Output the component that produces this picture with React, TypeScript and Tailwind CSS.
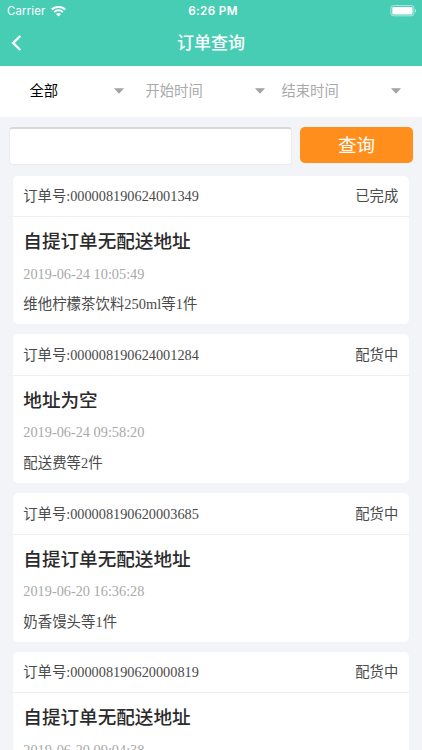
import React from "react";

interface Order {
  id: string;
  status: string;
  address: string;
  time: string;
  summary: string;
}

const orders: Order[] = [
  {
    id: "000008190624001349",
    status: "已完成",
    address: "自提订单无配送地址",
    time: "2019-06-24 10:05:49",
    summary: "维他柠檬茶饮料250ml等1件",
  },
  {
    id: "000008190624001284",
    status: "配货中",
    address: "地址为空",
    time: "2019-06-24 09:58:20",
    summary: "配送费等2件",
  },
  {
    id: "000008190620003685",
    status: "配货中",
    address: "自提订单无配送地址",
    time: "2019-06-20 16:36:28",
    summary: "奶香馒头等1件",
  },
  {
    id: "000008190620000819",
    status: "配货中",
    address: "自提订单无配送地址",
    time: "2019-06-20 09:04:38",
    summary: "鲜牛奶等1件",
  },
];

const StatusBar = () => (
  <div className="grid h-[22px] grid-cols-3 items-center pl-[7px] pr-[5px] font-['Inter','Liberation_Sans',sans-serif] text-white">
    <div className="flex items-center gap-[6px]">
      <span className="text-[11.4px] leading-[22px] tracking-[0.15px]">Carrier</span>
      <svg className="h-[11px] w-[15px]" viewBox="0 0 15 11" fill="none" stroke="currentColor">
        <path d="M0.8 3.6a9.6 9.6 0 0 1 13.4 0" strokeWidth="2.1" />
        <path d="M3.2 6.1a6.1 6.1 0 0 1 8.6 0" strokeWidth="2" />
        <path d="M7.5 10.6 5 8.1a3.6 3.6 0 0 1 5 0z" fill="currentColor" stroke="none" />
      </svg>
    </div>
    <span className="whitespace-nowrap pl-[2px] text-center text-[11.7px] leading-[22px] font-semibold tracking-[0.35px]">
      6:26 PM
    </span>
    <svg className="h-[12px] w-[27px] justify-self-end" viewBox="0 0 27 12" fill="none">
      <rect x="0.9" y="0.6" width="23" height="10.2" rx="2.4" stroke="white" strokeOpacity="0.55" />
      <rect x="2.3" y="2" width="20.2" height="7.4" rx="1" fill="white" />
      <path d="M25 4c1.5.4 1.5 3.2 0 3.6z" fill="white" fillOpacity="0.6" />
    </svg>
  </div>
);

const Caret = () => (
  <svg className="h-[6px] w-[10px]" viewBox="0 0 10 6" fill="#a3a3a3">
    <path d="M0 0.3h10L5 5.7z" />
  </svg>
);

const OrderCard = ({ order }: { order: Order }) => (
  <article className="h-[148.5px] shrink-0 rounded-[5px] bg-white px-[10.3px] text-[14.3px] text-[#4a4a4a]">
    <header className="-mx-[10.3px] flex h-[41.5px] items-center justify-between border-b border-[#efefef] pt-[2px] pl-[10.3px] pr-[10.8px]">
      <span>订单号:{order.id}</span>
      <span>{order.status}</span>
    </header>
    <h2 className="mt-[11px] text-[18.6px] leading-[27px] font-medium text-[#2b2b2b]">{order.address}</h2>
    <p className="mt-[8.5px] leading-[20px] text-[#a9a9a9]">{order.time}</p>
    <p className="mt-[10.5px] text-[14.4px] leading-[20px] tracking-[0.04px]">{order.summary}</p>
  </article>
);

export default function App() {
  return (
    <div className="flex h-[750px] w-[422px] flex-col overflow-hidden bg-[#f3f4f7] font-['Liberation_Serif','Noto_Sans_CJK_SC',serif]">
      <header className="h-[65.5px] shrink-0 bg-[#48cdb5] text-white">
        <StatusBar />
        <div className="grid h-[43px] grid-cols-[40px_1fr_40px] items-center">
          <button className="pb-[1px] pl-[11px]" aria-label="返回">
            <svg className="h-[16px] w-[11px]" viewBox="0 0 11 16" fill="none" stroke="currentColor" strokeWidth="2.4">
              <path d="M9.3 1 2.2 8l7.1 7" />
            </svg>
          </button>
          <h1 className="text-center text-[17px] font-medium">订单查询</h1>
        </div>
      </header>

      <nav className="flex h-[51px] shrink-0 items-center bg-white text-[14.3px] text-[#aaa]">
        <div className="flex w-[124px] items-center justify-between pl-[29.5px] text-black">
          <span className="pt-[2px]">全部</span>
          <Caret />
        </div>
        <div className="flex w-[141px] items-center justify-between pl-[21.5px]">
          <span className="pt-[2px]">开始时间</span>
          <Caret />
        </div>
        <div className="flex w-[136px] items-center justify-between pl-[16.5px]">
          <span className="pt-[2px]">结束时间</span>
          <Caret />
        </div>
      </nav>

      <div className="flex h-[59px] shrink-0 items-start gap-[8px] pl-[9px] pr-[9px] pt-[10.5px]">
        <input className="h-[37.5px] w-[283px] rounded-[4px] border border-[#ececee] border-t-2 border-t-[#d8d8d8] bg-white px-2 outline-none" />
        <button className="mt-[0.4px] h-[36px] flex-1 rounded-[5px] bg-[#ff8e1c] pt-[2px] text-[18.5px] text-white">查询</button>
      </div>

      <main className="flex flex-col gap-[10.3px] px-[13px]">
        {orders.map((order) => (
          <OrderCard key={order.id} order={order} />
        ))}
      </main>
    </div>
  );
}
